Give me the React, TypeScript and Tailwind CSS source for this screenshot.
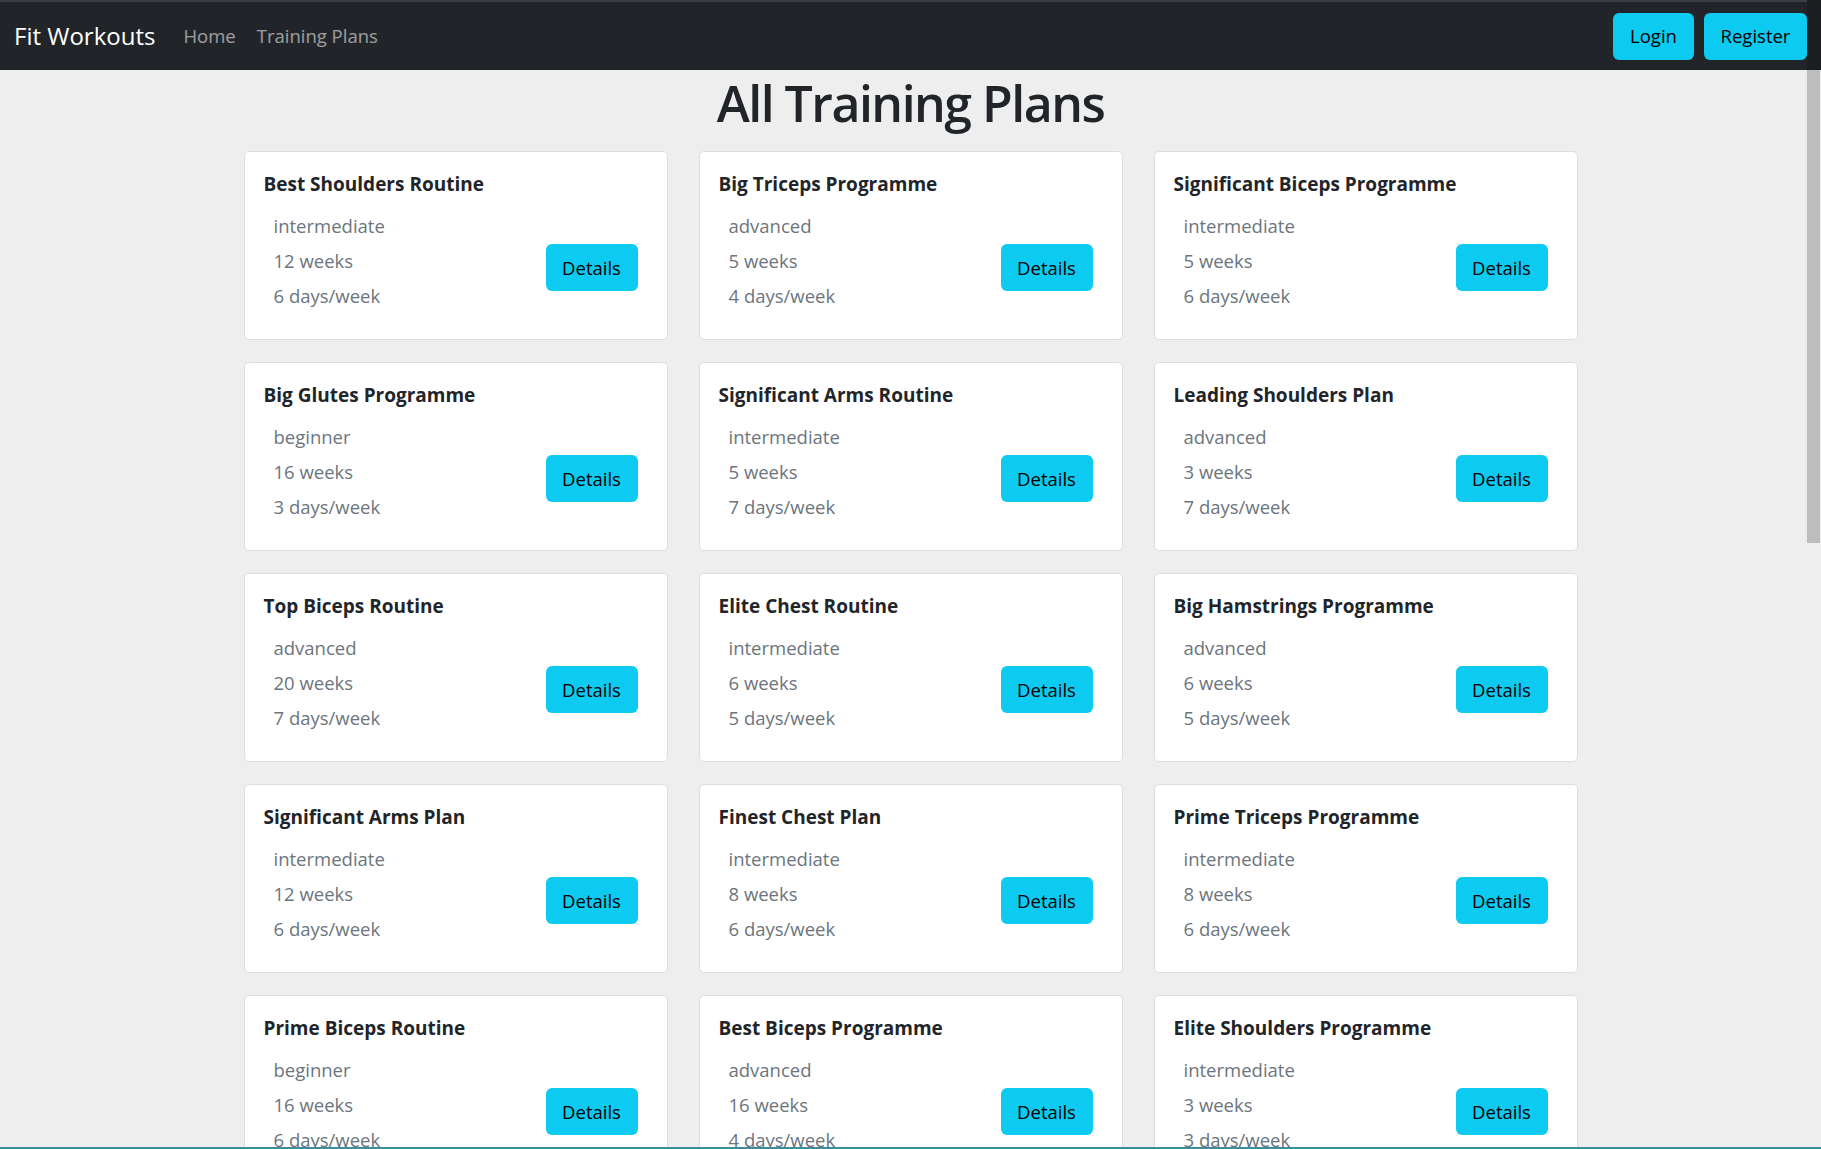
import React from 'react';

type Plan = {
  name: string;
  level: string;
  weeks: number;
  days: number;
};

const plans: Plan[] = [
  { name: 'Best Shoulders Routine', level: 'intermediate', weeks: 12, days: 6 },
  { name: 'Big Triceps Programme', level: 'advanced', weeks: 5, days: 4 },
  { name: 'Significant Biceps Programme', level: 'intermediate', weeks: 5, days: 6 },
  { name: 'Big Glutes Programme', level: 'beginner', weeks: 16, days: 3 },
  { name: 'Significant Arms Routine', level: 'intermediate', weeks: 5, days: 7 },
  { name: 'Leading Shoulders Plan', level: 'advanced', weeks: 3, days: 7 },
  { name: 'Top Biceps Routine', level: 'advanced', weeks: 20, days: 7 },
  { name: 'Elite Chest Routine', level: 'intermediate', weeks: 6, days: 5 },
  { name: 'Big Hamstrings Programme', level: 'advanced', weeks: 6, days: 5 },
  { name: 'Significant Arms Plan', level: 'intermediate', weeks: 12, days: 6 },
  { name: 'Finest Chest Plan', level: 'intermediate', weeks: 8, days: 6 },
  { name: 'Prime Triceps Programme', level: 'intermediate', weeks: 8, days: 6 },
  { name: 'Prime Biceps Routine', level: 'beginner', weeks: 16, days: 6 },
  { name: 'Best Biceps Programme', level: 'advanced', weeks: 16, days: 4 },
  { name: 'Elite Shoulders Programme', level: 'intermediate', weeks: 3, days: 3 },
];

const PlanCard: React.FC<{ plan: Plan }> = ({ plan }) => (
  <div className="bg-white border border-[#dedede] rounded-[5px] h-[189px] pt-[20px] pl-[19px] pr-[19px] pb-[12px] flex flex-col">
    <h5 className="text-[19px] leading-[24px] font-bold text-[#212529]">{plan.name}</h5>
    <div className="mt-[12px] flex items-center justify-between">
      <ul className="pl-[10px] pb-[14px] text-[18.5px] leading-[35px] text-[#6c757d]">
        <li>{plan.level}</li>
        <li>{plan.weeks} weeks</li>
        <li>{plan.days} days/week</li>
      </ul>
      <button className="mr-[10px] w-[92px] h-[47px] rounded-[6px] bg-[#0dcaf0] text-[18.5px] text-black">
        Details
      </button>
    </div>
  </div>
);

export default function App() {
  return (
    <div className="relative h-screen overflow-hidden bg-[#eeeeee] font-['Segoe_UI','Open_Sans',sans-serif]">
      <nav className="h-[70px] bg-[#212529] border-t-2 border-[#3b3e42] flex items-center justify-between pl-[14px] pr-[14px]">
        <div className="flex items-center">
          <a href="#" className="text-[24px] text-white">Fit Workouts</a>
          <div className="ml-[28px] flex items-center gap-[21px] text-[18.5px] text-white/55">
            <a href="#">Home</a>
            <a href="#">Training Plans</a>
          </div>
        </div>
        <div className="flex items-center gap-[10px]">
          <button className="w-[81px] h-[47px] rounded-[6px] bg-[#0dcaf0] text-[18.5px] text-black">Login</button>
          <button className="w-[103px] h-[47px] rounded-[6px] bg-[#0dcaf0] text-[18.5px] text-black">Register</button>
        </div>
      </nav>

      <main className="pt-[8px]">
        <h1 className="text-center text-[50px] leading-[50px] font-semibold tracking-[-1.5px] text-[#212529]">
          All Training Plans
        </h1>
        <div className="mt-[23px] w-[1334px] mx-auto grid grid-cols-3 gap-x-[31px] gap-y-[22px]">
          {plans.map((p) => (
            <PlanCard key={p.name} plan={p} />
          ))}
        </div>
      </main>

      {/* scrollbar */}
      <div className="absolute top-0 right-0 w-[14px] h-[70px] bg-[#1b1e21]" />
      <div className="absolute top-[70px] right-[1px] w-[13px] h-[473px] bg-[#bdbdbd]" />
      <div className="absolute bottom-0 left-0 right-0 h-[2px] bg-[#3c8c9a]" />
    </div>
  );
}
